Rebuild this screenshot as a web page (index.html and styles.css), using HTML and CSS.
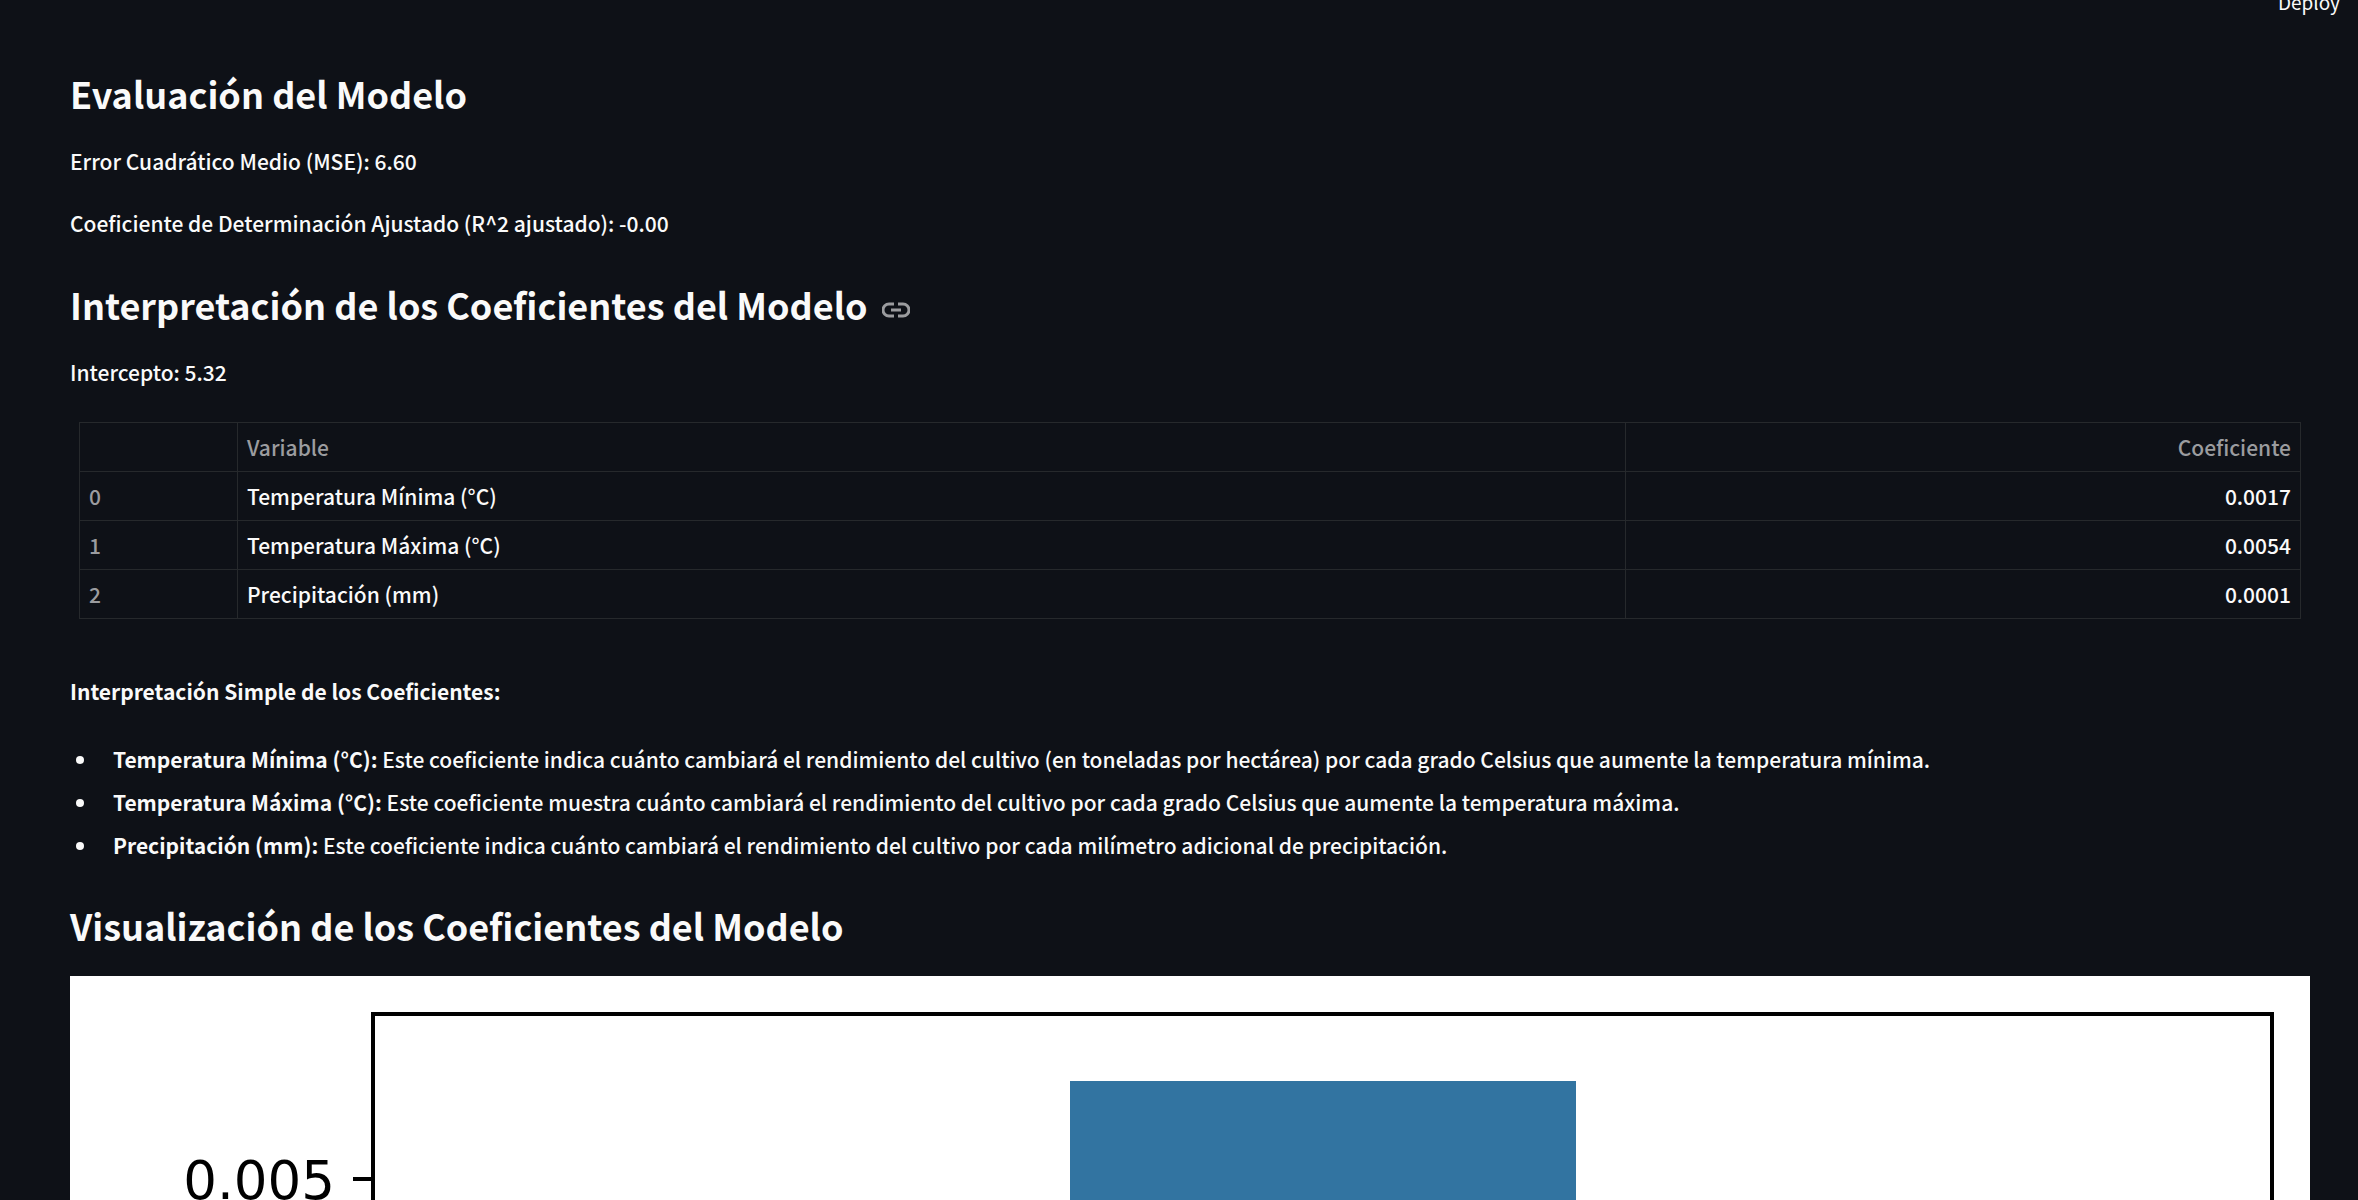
FILE: index.html
```html
<!DOCTYPE html>
<html lang="es">
<head>
<meta charset="utf-8">
<meta name="viewport" content="width=device-width, initial-scale=1">
<title>Evaluación del Modelo</title>
<link rel="stylesheet" href="styles.css">
</head>
<body>
<header class="toolbar"><button class="deploy" type="button">Deploy</button></header>
<main class="content">
  <h2 class="heading">Evaluación del Modelo</h2>
  <p class="text">Error Cuadrático Medio (MSE): 6.60</p>
  <p class="text">Coeficiente de Determinación Ajustado (R^2 ajustado): -0.00</p>
  <h2 class="heading" id="interpretacion">Interpretación de los Coeficientes del Modelo
    <a class="anchor" href="#interpretacion" aria-label="Enlace a esta sección"><svg class="anchor-icon" viewBox="0 0 28 16" aria-hidden="true"><path d="M12 2H7a6 6 0 0 0 0 12h5M16 2h5a6 6 0 0 1 0 12h-5M9 8h10"/></svg></a>
  </h2>
  <p class="text">Intercepto: 5.32</p>
  <table class="table">
    <colgroup><col class="col-index"><col class="col-name"><col></colgroup>
    <thead><tr><th></th><th scope="col">Variable</th><th class="number" scope="col">Coeficiente</th></tr></thead>
    <tbody>
      <tr><th scope="row">0</th><td>Temperatura Mínima (°C)</td><td class="number">0.0017</td></tr>
      <tr><th scope="row">1</th><td>Temperatura Máxima (°C)</td><td class="number">0.0054</td></tr>
      <tr><th scope="row">2</th><td>Precipitación (mm)</td><td class="number">0.0001</td></tr>
    </tbody>
  </table>
  <p class="text"><strong>Interpretación Simple de los Coeficientes:</strong></p>
  <ul class="list">
    <li><strong>Temperatura Mínima (°C):</strong> Este coeficiente indica cuánto cambiará el rendimiento del cultivo (en toneladas por hectárea) por cada grado Celsius que aumente la temperatura mínima.</li>
    <li><strong>Temperatura Máxima (°C):</strong> Este coeficiente muestra cuánto cambiará el rendimiento del cultivo por cada grado Celsius que aumente la temperatura máxima.</li>
    <li><strong>Precipitación (mm):</strong> Este coeficiente indica cuánto cambiará el rendimiento del cultivo por cada milímetro adicional de precipitación.</li>
  </ul>
  <h2 class="heading">Visualización de los Coeficientes del Modelo</h2>
  <svg class="chart" viewBox="0 0 2240 226" role="img" aria-label="Gráfico de barras de los coeficientes">
    <rect class="bar" x="1000" y="105" width="506" height="121"/>
    <path class="axis" d="M303 226V38H2202V226M283 203H303"/>
    <text class="tick" x="265" y="223">0.005</text>
  </svg>
</main>
</body>
</html>
```
FILE: styles.css
```css
* { box-sizing: border-box; }

body {
  margin: 0;
  height: 100vh;
  overflow: hidden;
  background: #0e1117;
  color: #fafafa;
  font-family: "Noto Sans CJK SC", "Noto Sans", sans-serif;
  font-size: 21px;
  font-weight: 500;
  line-height: 38px;
}

.toolbar {
  display: flex;
  justify-content: flex-end;
  align-items: flex-end;
  height: 18px;
  padding-right: 18px;
}

.deploy {
  padding: 0;
  border: 0;
  background: none;
  color: inherit;
  font: inherit;
  font-size: 19px;
  font-weight: 400;
  line-height: 32px;
}

.content { padding: 37px 48px 0 70px; }

.heading {
  margin: 0;
  padding: 14px 0 25px;
  font-size: 36px;
  font-weight: 700;
  line-height: 48px;
}

.anchor {
  margin-left: 6px;
  color: #9b9c9f;
}

.anchor-icon {
  width: 28px;
  height: 16px;
  fill: none;
  stroke: currentColor;
  stroke-width: 3;
  vertical-align: 2px;
}

.text { margin: 0 0 24px; }

.table {
  width: calc(100% - 18px);
  margin: 31px 9px 53px;
  border-collapse: collapse;
  table-layout: fixed;
}

.col-index { width: 158px; }
.col-name { width: 1388px; }

.table th,
.table td {
  height: 49px;
  padding: 0 9px;
  border: 1px solid #26292c;
  text-align: left;
  line-height: 36px;
}

.table th {
  color: #9b9c9f;
  font-weight: 500;
}

.table .number { text-align: right; }

.list {
  margin: 28px 0 20px;
  padding-left: 43px;
  line-height: 43px;
  list-style: none;
}

.list li::before {
  content: "";
  display: inline-block;
  width: 8px;
  height: 8px;
  margin: 0 29px 0 -37px;
  border-radius: 50%;
  background: currentColor;
  vertical-align: 4px;
}

.chart {
  display: block;
  width: 100%;
  margin-top: 2px;
  background: #fff;
}

.bar { fill: #3274a1; }

.axis {
  fill: none;
  stroke: #000;
  stroke-width: 4;
}

.tick {
  font-family: "DejaVu Sans", sans-serif;
  font-size: 53px;
  text-anchor: end;
}
```
